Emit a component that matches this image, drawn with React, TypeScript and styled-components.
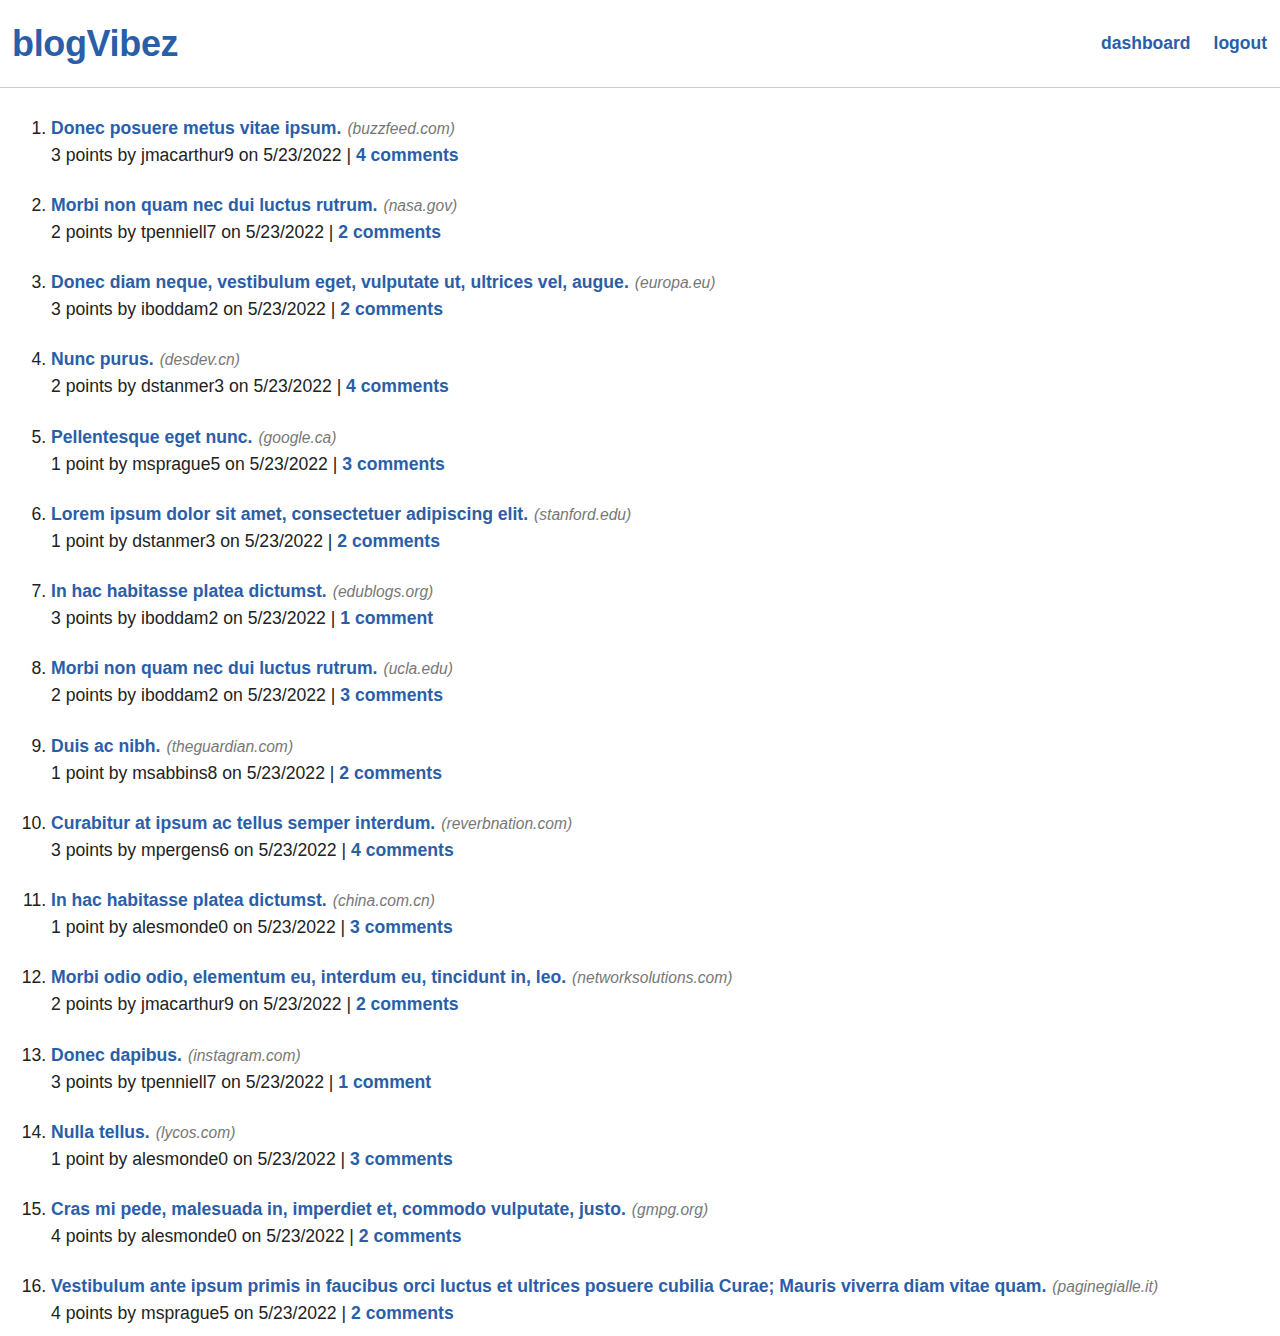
import React from 'react';
import styled, { createGlobalStyle } from 'styled-components';

const GlobalStyle = createGlobalStyle`
	body {
		margin: 0;
		background: #fff;
		font-family: "Liberation Sans", Arial, Helvetica, sans-serif;
		color: #222;
	}
`;

const Blue = '#2a5ea8';

type Post = {
	title: string;
	domain: string;
	points: number;
	user: string;
	comments: number;
};

const posts: Post[] = [
	{ title: 'Donec posuere metus vitae ipsum.', domain: 'buzzfeed.com', points: 3, user: 'jmacarthur9', comments: 4 },
	{ title: 'Morbi non quam nec dui luctus rutrum.', domain: 'nasa.gov', points: 2, user: 'tpenniell7', comments: 2 },
	{ title: 'Donec diam neque, vestibulum eget, vulputate ut, ultrices vel, augue.', domain: 'europa.eu', points: 3, user: 'iboddam2', comments: 2 },
	{ title: 'Nunc purus.', domain: 'desdev.cn', points: 2, user: 'dstanmer3', comments: 4 },
	{ title: 'Pellentesque eget nunc.', domain: 'google.ca', points: 1, user: 'msprague5', comments: 3 },
	{ title: 'Lorem ipsum dolor sit amet, consectetuer adipiscing elit.', domain: 'stanford.edu', points: 1, user: 'dstanmer3', comments: 2 },
	{ title: 'In hac habitasse platea dictumst.', domain: 'edublogs.org', points: 3, user: 'iboddam2', comments: 1 },
	{ title: 'Morbi non quam nec dui luctus rutrum.', domain: 'ucla.edu', points: 2, user: 'iboddam2', comments: 3 },
	{ title: 'Duis ac nibh.', domain: 'theguardian.com', points: 1, user: 'msabbins8', comments: 2 },
	{ title: 'Curabitur at ipsum ac tellus semper interdum.', domain: 'reverbnation.com', points: 3, user: 'mpergens6', comments: 4 },
	{ title: 'In hac habitasse platea dictumst.', domain: 'china.com.cn', points: 1, user: 'alesmonde0', comments: 3 },
	{ title: 'Morbi odio odio, elementum eu, interdum eu, tincidunt in, leo.', domain: 'networksolutions.com', points: 2, user: 'jmacarthur9', comments: 2 },
	{ title: 'Donec dapibus.', domain: 'instagram.com', points: 3, user: 'tpenniell7', comments: 1 },
	{ title: 'Nulla tellus.', domain: 'lycos.com', points: 1, user: 'alesmonde0', comments: 3 },
	{ title: 'Cras mi pede, malesuada in, imperdiet et, commodo vulputate, justo.', domain: 'gmpg.org', points: 4, user: 'alesmonde0', comments: 2 },
	{ title: 'Vestibulum ante ipsum primis in faucibus orci luctus et ultrices posuere cubilia Curae; Mauris viverra diam vitae quam.', domain: 'paginegialle.it', points: 4, user: 'msprague5', comments: 2 },
];

const Header = styled.header`
	display: flex;
	align-items: center;
	justify-content: space-between;
	height: 87px;
	padding: 0 13px;
	border-bottom: 1px solid #ccc;
`;

const Logo = styled.a`
	font-size: 36px;
	font-weight: bold;
	color: ${Blue};
	text-decoration: none;
	letter-spacing: -0.35px;
	margin-left: -1px;
`;

const Nav = styled.nav`
	display: flex;
	gap: 23px;
	margin-top: -1px;
`;

const NavLink = styled.a`
	font-size: 17.5px;
	font-weight: bold;
	color: ${Blue};
	text-decoration: none;
`;

const List = styled.ol`
	margin: 0;
	padding: 26.5px 0 0 51px;
	font-size: 17.6px;
`;

const Item = styled.li`
	margin-bottom: 23.25px;
`;

const TitleLine = styled.div`
	height: 27px;
	line-height: 27px;
	white-space: nowrap;
`;

const Title = styled.a`
	font-weight: bold;
	color: ${Blue};
	text-decoration: none;
`;

const Domain = styled.span`
	margin-left: 6px;
	font-size: 15.6px;
	line-height: 20px;
	font-style: italic;
	color: #777;
`;

const Meta = styled.div`
	height: 27px;
	line-height: 27px;
	color: #222;
`;

const CommentsLink = styled.a`
	font-weight: bold;
	color: ${Blue};
	text-decoration: none;
`;

const App = () => (
	<>
		<GlobalStyle />
		<Header>
			<Logo href="#">blogVibez</Logo>
			<Nav>
				<NavLink href="#">dashboard</NavLink>
				<NavLink href="#">logout</NavLink>
			</Nav>
		</Header>
		<List>
			{posts.map((p, i) => (
				<Item key={i}>
					<TitleLine>
						<Title href="#">{p.title}</Title>
						<Domain>({p.domain})</Domain>
					</TitleLine>
					<Meta>
						{p.points} {p.points === 1 ? 'point' : 'points'} by {p.user} on 5/23/2022 |{' '}
						<CommentsLink href="#">{p.comments} {p.comments === 1 ? 'comment' : 'comments'}</CommentsLink>
					</Meta>
				</Item>
			))}
		</List>
	</>
);

export default App;
